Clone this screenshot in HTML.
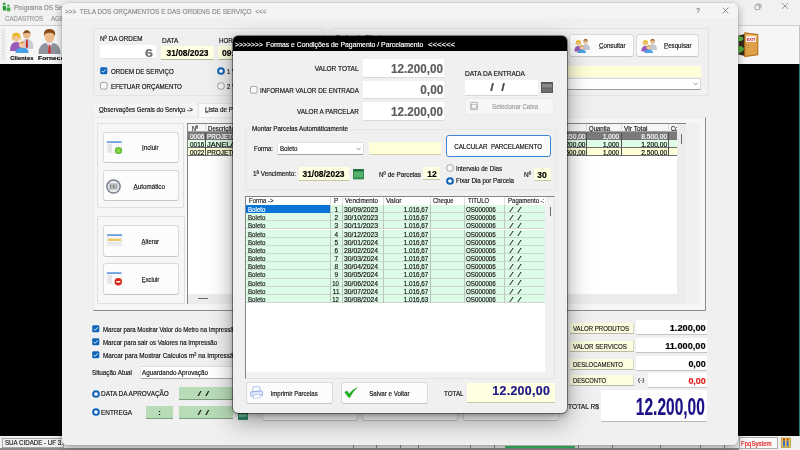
<!DOCTYPE html>
<html lang="pt-BR"><head><meta charset="utf-8"><title>Programa OS</title>
<style>
html,body{margin:0;padding:0}
body{width:800px;height:450px;overflow:hidden;background:#000;position:relative;font-family:"Liberation Sans",sans-serif}
#w{position:absolute;left:0;top:0;width:800px;height:450px;overflow:hidden;background:#000;will-change:transform}
.b{position:absolute;box-sizing:border-box}
.t{position:absolute;white-space:pre;font-family:"Liberation Sans",sans-serif;-webkit-text-stroke:0.18px currentColor}
svg{position:absolute;overflow:visible}
u{text-decoration:underline;text-decoration-thickness:0.4px;text-decoration-color:rgba(0,0,0,0.45);text-underline-offset:0.4px}
</style></head>
<body>
<div id="w">
<div class="b" style="left:0px;top:0px;width:800px;height:25px;background:#f1f1f1;"></div>
<div class="b" style="left:0px;top:25px;width:800px;height:38.8px;background:#f6f6f6;"></div>
<div class="b" style="left:0px;top:25px;width:800px;height:0.8px;background:#cfcfcf;"></div>
<div class="b" style="left:798.8px;top:25px;width:1.2px;height:38.8px;background:#c4c4c4;"></div>
<div class="b" style="left:0px;top:436px;width:800px;height:14px;background:#f0f0f0;"></div>
<svg style="left:2px;top:2px" width="9" height="10" viewBox="0 0 9 10"><circle cx="2.2" cy="2" r="1.4" fill="#3aa648"/><path d="M0.5 4 L4 4 L4.5 8.5 L1 8.5Z" fill="#2e9a3e"/><circle cx="6.3" cy="3.6" r="1.3" fill="#58b860"/><path d="M4.8 5.4 L8.3 5.4 L8.3 9.3 L5 9.3Z" fill="#3fa84c"/></svg>
<span class="t" style="top:3px;line-height:9px;height:9px;font-size:7.7px;color:#8c8c8c;left:14px;transform-origin:0 50%;transform:scaleX(0.827);">Programa OS Se</span>
<span class="t" style="top:14px;line-height:9px;height:9px;font-size:7.5px;color:#9a9a9a;left:5px;transform-origin:0 50%;transform:scaleX(0.814);">CADASTROS</span>
<span class="t" style="top:14px;line-height:9px;height:9px;font-size:7.5px;color:#9a9a9a;left:51px;transform-origin:0 50%;transform:scaleX(0.821);">AGE</span>
<svg style="left:1px;top:28px" width="5" height="33" viewBox="0 0 5 33"><rect x="0.3" y="0.50" width="0.9" height="0.9" fill="#bcbcbc"/><rect x="2.5" y="0.50" width="0.9" height="0.9" fill="#bcbcbc"/><rect x="1.4" y="2.10" width="0.9" height="0.9" fill="#bcbcbc"/><rect x="3.6" y="2.10" width="0.9" height="0.9" fill="#bcbcbc"/><rect x="0.3" y="3.70" width="0.9" height="0.9" fill="#bcbcbc"/><rect x="2.5" y="3.70" width="0.9" height="0.9" fill="#bcbcbc"/><rect x="1.4" y="5.30" width="0.9" height="0.9" fill="#bcbcbc"/><rect x="3.6" y="5.30" width="0.9" height="0.9" fill="#bcbcbc"/><rect x="0.3" y="6.90" width="0.9" height="0.9" fill="#bcbcbc"/><rect x="2.5" y="6.90" width="0.9" height="0.9" fill="#bcbcbc"/><rect x="1.4" y="8.50" width="0.9" height="0.9" fill="#bcbcbc"/><rect x="3.6" y="8.50" width="0.9" height="0.9" fill="#bcbcbc"/><rect x="0.3" y="10.10" width="0.9" height="0.9" fill="#bcbcbc"/><rect x="2.5" y="10.10" width="0.9" height="0.9" fill="#bcbcbc"/><rect x="1.4" y="11.70" width="0.9" height="0.9" fill="#bcbcbc"/><rect x="3.6" y="11.70" width="0.9" height="0.9" fill="#bcbcbc"/><rect x="0.3" y="13.30" width="0.9" height="0.9" fill="#bcbcbc"/><rect x="2.5" y="13.30" width="0.9" height="0.9" fill="#bcbcbc"/><rect x="1.4" y="14.90" width="0.9" height="0.9" fill="#bcbcbc"/><rect x="3.6" y="14.90" width="0.9" height="0.9" fill="#bcbcbc"/><rect x="0.3" y="16.50" width="0.9" height="0.9" fill="#bcbcbc"/><rect x="2.5" y="16.50" width="0.9" height="0.9" fill="#bcbcbc"/><rect x="1.4" y="18.10" width="0.9" height="0.9" fill="#bcbcbc"/><rect x="3.6" y="18.10" width="0.9" height="0.9" fill="#bcbcbc"/><rect x="0.3" y="19.70" width="0.9" height="0.9" fill="#bcbcbc"/><rect x="2.5" y="19.70" width="0.9" height="0.9" fill="#bcbcbc"/><rect x="1.4" y="21.30" width="0.9" height="0.9" fill="#bcbcbc"/><rect x="3.6" y="21.30" width="0.9" height="0.9" fill="#bcbcbc"/><rect x="0.3" y="22.90" width="0.9" height="0.9" fill="#bcbcbc"/><rect x="2.5" y="22.90" width="0.9" height="0.9" fill="#bcbcbc"/><rect x="1.4" y="24.50" width="0.9" height="0.9" fill="#bcbcbc"/><rect x="3.6" y="24.50" width="0.9" height="0.9" fill="#bcbcbc"/><rect x="0.3" y="26.10" width="0.9" height="0.9" fill="#bcbcbc"/><rect x="2.5" y="26.10" width="0.9" height="0.9" fill="#bcbcbc"/><rect x="1.4" y="27.70" width="0.9" height="0.9" fill="#bcbcbc"/><rect x="3.6" y="27.70" width="0.9" height="0.9" fill="#bcbcbc"/><rect x="0.3" y="29.30" width="0.9" height="0.9" fill="#bcbcbc"/><rect x="2.5" y="29.30" width="0.9" height="0.9" fill="#bcbcbc"/><rect x="1.4" y="30.90" width="0.9" height="0.9" fill="#bcbcbc"/><rect x="3.6" y="30.90" width="0.9" height="0.9" fill="#bcbcbc"/></svg>
<svg style="left:6.5px;top:29px" width="30" height="24" viewBox="0 0 28 23">
<ellipse cx="18.5" cy="5" rx="3.6" ry="4" fill="#e9b98a"/><path d="M14.6 4.5 Q18.5 -2 22.6 4.5 Q20 2.5 14.6 4.5Z" fill="#7a4a20"/>
<path d="M13 19 Q13 9.5 18.5 9.5 Q25 9.5 25 19Z" fill="#c9ccd6"/><path d="M18 10 L19.4 10 L19.8 17 L18.7 18.6 L17.6 17Z" fill="#c82828"/>
<ellipse cx="8.5" cy="8.5" rx="3.4" ry="3.7" fill="#f0c49a"/><path d="M4.4 12 Q3.6 3 8.5 3.6 Q13.6 3 12.6 12 Q12 6.5 8.5 6.5 Q5 6.5 4.4 12Z" fill="#e8b820"/>
<path d="M2.5 21 Q2.5 12.5 8.5 12.5 Q14.5 12.5 14.5 21Z" fill="#9a5ab8"/>
<path d="M7.6 23 Q7.6 18 14 18 Q20.4 18 20.4 23Z" fill="#4aa0e6"/><ellipse cx="14" cy="14.8" rx="3" ry="3.1" fill="#f2c9a2"/><path d="M10.8 14.6 Q14 9.6 17.2 14.6 Q14 12.4 10.8 14.6Z" fill="#c98a28"/></svg>
<span class="t" style="top:54px;line-height:7px;height:7px;font-size:6.2px;color:#000;font-weight:bold;left:8.94px;transform-origin:50% 50%;transform:scaleX(0.912);letter-spacing:0.2px;">Clientes</span>
<svg style="left:38px;top:28px" width="24" height="26" viewBox="0 0 24 26">
<path d="M0.5 26 Q0.5 14.5 11.5 14.5 Q22.5 14.5 22.5 26Z" fill="#8d929c"/><path d="M8.2 15 L11.5 19.5 L14.8 15Z" fill="#f4f4f4"/>
<path d="M10.8 16.5 L12.2 16.5 L12.8 24.5 L11.5 26 L10.2 24.5Z" fill="#d03030"/>
<ellipse cx="11.5" cy="8.6" rx="5" ry="5.8" fill="#ecbb8c"/><path d="M6 8.5 Q5 0.6 11.5 1 Q18.4 0.8 17 8.5 Q16 4.6 11.5 4.8 Q7 4.6 6 8.5Z" fill="#8a4a16"/></svg>
<span class="t" style="top:54px;line-height:7px;height:7px;font-size:6.2px;color:#000;font-weight:bold;left:38px;transform-origin:0 50%;transform:scaleX(1.037);letter-spacing:0.2px;">Fornece</span>
<svg style="left:754px;top:3px" width="8" height="8" viewBox="0 0 8 8"><rect x="1" y="2" width="4.6" height="4.6" rx="1" fill="none" stroke="#6a6a6a" stroke-width="0.6"/><path d="M2.6 1 L6 1 Q7 1 7 2 L7 5.4" fill="none" stroke="#6a6a6a" stroke-width="0.6"/></svg>
<svg style="left:781px;top:2px" width="8" height="8" viewBox="0 0 8 8"><path d="M1 1 L7 7 M7 1 L1 7" stroke="#6a6a6a" stroke-width="0.65" fill="none"/></svg>
<svg style="left:738px;top:31px" width="21" height="27" viewBox="0 0 21 27">
<path d="M0.5 4.5 L7 3 L7 25 L0.5 23.5Z" fill="#3a2c1c"/>
<path d="M0.5 5.5 Q4.5 4.5 5.5 8 Q3 10.8 0.5 10Z" fill="#5cc04a"/><path d="M0.5 15.5 Q5 14.5 6 18.5 Q3 22.5 0.5 21.5Z" fill="#52b440"/>
<path d="M6.2 1.2 L20.3 3 L20.3 24.2 L6.2 26.2Z" fill="#b8741e"/><path d="M7.4 2.8 L19.2 4.2 L19.2 23.2 L7.4 24.8Z" fill="#e0a048"/>
<path d="M7.4 2.8 L19.2 4.2 L19.2 7 L7.4 6Z" fill="#eab868"/>
<rect x="8" y="5.2" width="10" height="5.8" fill="#fbf4f0"/>
<text x="13" y="9.9" font-family="Liberation Sans, sans-serif" font-size="4.4" font-weight="bold" fill="#d81828" text-anchor="middle" textLength="8.6" lengthAdjust="spacingAndGlyphs">EXIT</text>
<circle cx="9.9" cy="15.4" r="1.1" fill="#f2cc80" stroke="#8a5410" stroke-width="0.4"/></svg>
<div class="b" style="left:798.6px;top:64px;width:1.4px;height:372px;background:#1f7f74;"></div>
<div class="b" style="left:1.5px;top:437.6px;width:62px;height:10px;background:#f2f2f2;border:0.6px solid #a8a8a8;"></div>
<span class="t" style="top:438px;line-height:9px;height:9px;font-size:7.2px;color:#222;left:4.5px;transform-origin:0 50%;transform:scaleX(0.858);">SUA CIDADE - UF 3.</span>
<div class="b" style="left:739.4px;top:437.4px;width:38.6px;height:11.6px;background:#fafafa;border:0.6px solid #b0b0b0;"></div>
<span class="t" style="top:439px;line-height:9px;height:9px;font-size:7.2px;color:#e01818;left:741.2px;transform-origin:0 50%;transform:scaleX(0.840);">FpqSystem</span>
<svg style="left:781px;top:437px" width="10" height="11" viewBox="0 0 10 11"><rect x="0.5" y="1" width="9" height="9.5" fill="#f0c840" stroke="#8a6a10" stroke-width="0.5"/><rect x="2" y="3.5" width="2" height="6" fill="#3a6ad0"/><rect x="5.6" y="3.5" width="2" height="6" fill="#3a6ad0"/><circle cx="3" cy="2.6" r="1" fill="#c03020"/><circle cx="6.6" cy="2.6" r="1" fill="#c03020"/></svg>
<div class="b" style="left:0px;top:447.6px;width:738.5px;height:2.4px;background:#8c8c8c;"></div>
<div class="b" style="left:505px;top:446.4px;width:70px;height:1.4px;background:#38c060;"></div>
<div class="b" style="left:353px;top:445px;width:0.7px;height:3px;background:#8a8a8a;"></div>
<div class="b" style="left:376px;top:445px;width:0.7px;height:3px;background:#8a8a8a;"></div>
<div class="b" style="left:400px;top:445px;width:0.7px;height:3px;background:#8a8a8a;"></div>
<div class="b" style="left:418px;top:445px;width:0.7px;height:3px;background:#8a8a8a;"></div>
<div class="b" style="left:470px;top:445px;width:0.7px;height:3px;background:#8a8a8a;"></div>
<div class="b" style="left:494px;top:445px;width:0.7px;height:3px;background:#8a8a8a;"></div>
<div class="b" style="left:578px;top:445px;width:0.7px;height:3px;background:#8a8a8a;"></div>
<div class="b" style="left:612px;top:445px;width:0.7px;height:3px;background:#8a8a8a;"></div>
<div class="b" style="left:660px;top:445px;width:0.7px;height:3px;background:#8a8a8a;"></div>
<div class="b" style="left:700px;top:445px;width:0.7px;height:3px;background:#8a8a8a;"></div>
<div class="b" style="left:724px;top:445px;width:0.7px;height:3px;background:#8a8a8a;"></div>
<div class="b" style="left:62px;top:2.6px;width:676.4px;height:442px;background:#f0f0f0;border-radius:5.5px;box-shadow:0 3px 10px rgba(0,0,0,0.35),0 0 0 0.5px rgba(0,0,0,0.10);"></div>
<div class="b" style="left:62px;top:2.6px;width:676.4px;height:15px;background:#f4f4f4;border-radius:5.5px 5.5px 0 0;"></div>
<span class="t" style="top:7px;line-height:9px;height:9px;font-size:7.7px;color:#8a8a8a;left:65px;transform-origin:0 50%;transform:scaleX(0.841);">&gt;&gt;&gt;  TELA DOS ORÇAMENTOS E DAS ORDENS DE SERVIÇO  &lt;&lt;&lt;</span>
<span class="t" style="top:6px;line-height:9px;height:9px;font-size:7.8px;color:#6a6a6a;left:696.33px;transform-origin:50% 50%;transform:scaleX(0.830);">?</span>
<svg style="left:721.6px;top:6.8px" width="7" height="7" viewBox="0 0 7 7"><path d="M0.6 0.6 L6.4 6.4 M6.4 0.6 L0.6 6.4" stroke="#686868" stroke-width="0.75" fill="none"/></svg>
<div class="b" style="left:92.5px;top:27.5px;width:231px;height:68.5px;border:0.6px solid #e4e4e4;border-radius:1px;"></div>
<span class="t" style="top:34px;line-height:9px;height:9px;font-size:7.7px;color:#111;left:100px;transform-origin:0 50%;transform:scaleX(0.824);">Nº DA ORDEM</span>
<div class="b" style="left:99.6px;top:45.2px;width:56.6px;height:13.8px;background:#fff;border-bottom:0.6px solid #e2e2e2;"></div>
<span class="t" style="top:47px;line-height:12px;height:12px;font-size:11px;color:#707070;font-weight:bold;right:646.5px;transform-origin:100% 50%;transform:scaleX(1.308);">6</span>
<span class="t" style="top:36px;line-height:9px;height:9px;font-size:7.7px;color:#111;left:162px;transform-origin:0 50%;transform:scaleX(0.851);">DATA</span>
<div class="b" style="left:161px;top:46px;width:52.5px;height:13.5px;background:#ffffe1;border-bottom:0.6px solid #b8b8a0;"></div>
<span class="t" style="top:48px;line-height:10px;height:10px;font-size:9px;color:#000;font-weight:bold;left:164.78px;transform-origin:50% 50%;transform:scaleX(0.933);">31/08/2023</span>
<span class="t" style="top:36px;line-height:9px;height:9px;font-size:7.7px;color:#111;left:218.5px;transform-origin:0 50%;transform:scaleX(0.809);">HORA</span>
<div class="b" style="left:218px;top:46px;width:40px;height:13.5px;background:#ffffe1;border-bottom:0.6px solid #b8b8a0;"></div>
<span class="t" style="top:48px;line-height:10px;height:10px;font-size:9px;color:#000;font-weight:bold;left:222px;transform-origin:0 50%;transform:scaleX(0.956);">09:15</span>
<svg style="left:99.5px;top:67.2px" width="7.5" height="7.5" viewBox="0 0 8 8"><rect x="0.2" y="0.2" width="7.6" height="7.6" rx="1.5" fill="#0f64b8"/><path d="M1.9 4.1 L3.4 5.6 L6.2 2.5" stroke="#fff" stroke-width="0.9" fill="none"/></svg>
<span class="t" style="top:67px;line-height:9px;height:9px;font-size:7.7px;color:#111;left:110.5px;transform-origin:0 50%;transform:scaleX(0.806);">ORDEM DE SERVIÇO</span>
<svg style="left:99.5px;top:82px" width="7.5" height="7.5" viewBox="0 0 8 8"><rect x="0.5" y="0.5" width="7" height="7" rx="1.4" fill="#fafafa" stroke="#6a6a6a" stroke-width="0.6"/></svg>
<span class="t" style="top:82px;line-height:9px;height:9px;font-size:7.7px;color:#111;left:110.5px;transform-origin:0 50%;transform:scaleX(0.807);">EFETUAR ORÇAMENTO</span>
<svg style="left:217px;top:67.2px" width="8" height="8" viewBox="0 0 8 8"><circle cx="4" cy="4" r="3.85" fill="#0f62b6"/><circle cx="4" cy="4" r="1.85" fill="#fff"/></svg>
<span class="t" style="top:67px;line-height:9px;height:9px;font-size:7.7px;color:#111;left:227px;transform-origin:0 50%;transform:scaleX(0.779);">1 V</span>
<svg style="left:217px;top:82px" width="8" height="8" viewBox="0 0 8 8"><circle cx="4" cy="4" r="3.4" fill="#fafafa" stroke="#6a6a6a" stroke-width="0.6"/></svg>
<span class="t" style="top:82px;line-height:9px;height:9px;font-size:7.7px;color:#111;left:227px;transform-origin:0 50%;transform:scaleX(0.779);">2 V</span>
<div class="b" style="left:330px;top:27.5px;width:378.5px;height:68.5px;border:0.6px solid #e4e4e4;border-radius:1px;"></div>
<span class="t" style="top:33px;line-height:9px;height:9px;font-size:7.5px;color:#222;left:336px;transform-origin:0 50%;transform:scaleX(0.834);">Dados do Cliente</span>
<div class="b" style="left:569px;top:33.5px;width:64.5px;height:23.5px;background:#fcfcfc;border:0.6px solid #dadada;border-radius:3px;border-bottom-color:#c6c6c6;"></div>
<svg style="left:573px;top:37.5px" width="19" height="15" viewBox="0 0 19 15">
<ellipse cx="12.6" cy="3.2" rx="2.3" ry="2.5" fill="#e9b98a"/><path d="M10.2 3 Q12.6 -1.2 15.2 3 Q13 1.6 10.2 3Z" fill="#7a4a20"/>
<path d="M9 12 Q9 6 12.6 6 Q17 6 17 12Z" fill="#c4c7d2"/>
<ellipse cx="5.4" cy="5.4" rx="2.2" ry="2.4" fill="#f0c49a"/><path d="M2.8 7.6 Q2.2 1.8 5.4 2.2 Q8.8 1.8 8 7.6 Q7.6 4.2 5.4 4.2 Q3.2 4.2 2.8 7.6Z" fill="#e8b820"/>
<path d="M1.4 13.4 Q1.4 8 5.4 8 Q9.4 8 9.4 13.4Z" fill="#9a5ab8"/>
<path d="M4.4 15 Q4.4 11.4 8.7 11.4 Q13 11.4 13 15Z" fill="#4aa0e6"/><ellipse cx="8.7" cy="9.3" rx="2.1" ry="2.2" fill="#f2c9a2"/><path d="M6.5 9 Q8.7 5.6 11 9 Q8.7 7.6 6.5 9Z" fill="#c08a30"/></svg>
<span class="t" style="top:41px;line-height:9px;height:9px;font-size:7.7px;color:#111;left:598.5px;transform-origin:0 50%;transform:scaleX(0.804);"><u>C</u>onsultar</span>
<div class="b" style="left:636px;top:33.5px;width:62.5px;height:23.5px;background:#fcfcfc;border:0.6px solid #dadada;border-radius:3px;border-bottom-color:#c6c6c6;"></div>
<svg style="left:639.5px;top:37.5px" width="19" height="15" viewBox="0 0 19 15">
<ellipse cx="12.6" cy="3.2" rx="2.3" ry="2.5" fill="#e9b98a"/><path d="M10.2 3 Q12.6 -1.2 15.2 3 Q13 1.6 10.2 3Z" fill="#7a4a20"/>
<path d="M9 12 Q9 6 12.6 6 Q17 6 17 12Z" fill="#c4c7d2"/>
<ellipse cx="5.4" cy="5.4" rx="2.2" ry="2.4" fill="#f0c49a"/><path d="M2.8 7.6 Q2.2 1.8 5.4 2.2 Q8.8 1.8 8 7.6 Q7.6 4.2 5.4 4.2 Q3.2 4.2 2.8 7.6Z" fill="#e8b820"/>
<path d="M1.4 13.4 Q1.4 8 5.4 8 Q9.4 8 9.4 13.4Z" fill="#9a5ab8"/>
<path d="M4.4 15 Q4.4 11.4 8.7 11.4 Q13 11.4 13 15Z" fill="#4aa0e6"/><ellipse cx="8.7" cy="9.3" rx="2.1" ry="2.2" fill="#f2c9a2"/><path d="M6.5 9 Q8.7 5.6 11 9 Q8.7 7.6 6.5 9Z" fill="#c08a30"/></svg>
<span class="t" style="top:41px;line-height:9px;height:9px;font-size:7.7px;color:#111;left:663.5px;transform-origin:0 50%;transform:scaleX(0.803);"><u>P</u>esquisar</span>
<div class="b" style="left:334px;top:66px;width:367px;height:10.5px;background:#ffffd8;"></div>
<div class="b" style="left:334px;top:78px;width:367px;height:11.5px;background:#fff;border:0.6px solid #dcdcdc;border-radius:1px;border-bottom-color:#9a9a9a;"></div>
<svg style="left:693px;top:82px" width="5" height="4" viewBox="0 0 5 4"><path d="M0.5 0.8 L2.5 2.9 L4.5 0.8" stroke="#555" stroke-width="0.6" fill="none"/></svg>
<div class="b" style="left:94px;top:103px;width:103px;height:12.5px;background:#f4f4f4;"></div>
<span class="t" style="top:105px;line-height:9px;height:9px;font-size:7.7px;color:#111;left:99px;transform-origin:0 50%;transform:scaleX(0.797);"><u>O</u>bservações Gerais do Serviço -&gt;</span>
<div class="b" style="left:197.5px;top:102.5px;width:60px;height:14.5px;background:#fafafa;border:0.6px solid #e4e4e4;border-bottom:none;"></div>
<span class="t" style="top:105px;line-height:9px;height:9px;font-size:7.7px;color:#111;left:205px;transform-origin:0 50%;transform:scaleX(0.818);"><u>L</u>ista de P</span>
<div class="b" style="left:92.5px;top:116.5px;width:613px;height:194px;background:#f6f6f6;border:0.6px solid #e9e9e9;border-right:1.2px solid #8c8c8c;border-bottom:1.2px solid #8c8c8c;"></div>
<div class="b" style="left:96.6px;top:123.2px;width:87.4px;height:85px;border:0.6px solid #e0e0e0;border-radius:1px;"></div>
<div class="b" style="left:96.6px;top:216.4px;width:88.4px;height:87.6px;border:0.6px solid #e0e0e0;border-radius:1px;"></div>
<div class="b" style="left:102.6px;top:131.5px;width:76.6px;height:31.6px;background:#fcfcfc;border:0.6px solid #dadada;border-radius:3px;border-bottom-color:#c6c6c6;"></div>
<svg style="left:107px;top:140.5px" width="16" height="14" viewBox="0 0 16 14"><rect x="0" y="0.3" width="14.5" height="11.5" fill="#fbfbfb" stroke="#d8d8d8" stroke-width="0.4"/><rect x="0" y="0.3" width="14.5" height="1.6" fill="#5a96e0"/><rect x="1" y="3" width="4" height="8" fill="#e4e4e4"/><circle cx="11.5" cy="9.5" r="3.6" fill="#58b82e"/><circle cx="11.5" cy="9.5" r="2.2" fill="#8ad84a"/></svg>
<span class="t" style="top:143px;line-height:9px;height:9px;font-size:7.7px;color:#111;left:139.73px;transform-origin:50% 50%;transform:scaleX(0.803);"><u>I</u>ncluir</span>
<div class="b" style="left:102.6px;top:169.6px;width:76.6px;height:31.6px;background:#fcfcfc;border:0.6px solid #dadada;border-radius:3px;border-bottom-color:#c6c6c6;"></div>
<svg style="left:106px;top:178.5px" width="15" height="15" viewBox="0 0 15 15"><circle cx="7.5" cy="7.5" r="6.6" fill="#eceef2" stroke="#7a8290" stroke-width="1.5"/><rect x="3.6" y="4.6" width="7.8" height="5.8" fill="#fff" stroke="#666" stroke-width="0.3"/><path d="M4.6 5.2V9.8M6 5.2V9.8M7.4 5.2V9.8M8.8 5.2V9.8M10.2 5.2V9.8" stroke="#444" stroke-width="0.7"/></svg>
<span class="t" style="top:182px;line-height:9px;height:9px;font-size:7.7px;color:#111;left:129.74px;transform-origin:50% 50%;transform:scaleX(0.818);"><u>A</u>utomático</span>
<div class="b" style="left:102.6px;top:225px;width:76.6px;height:31.6px;background:#fcfcfc;border:0.6px solid #dadada;border-radius:3px;border-bottom-color:#c6c6c6;"></div>
<svg style="left:107px;top:234px" width="16" height="13" viewBox="0 0 16 13"><rect x="0" y="0.3" width="15" height="11.5" fill="#f6f6f6" stroke="#d8d8d8" stroke-width="0.4"/><rect x="0" y="0.3" width="15" height="1.6" fill="#5a96e0"/><rect x="1" y="4.6" width="13" height="2.4" fill="#e8c860"/><rect x="1" y="8" width="13" height="2.4" fill="#e6e6e6"/></svg>
<span class="t" style="top:237px;line-height:9px;height:9px;font-size:7.7px;color:#111;left:139.16px;transform-origin:50% 50%;transform:scaleX(0.772);"><u>A</u>lterar</span>
<div class="b" style="left:102.6px;top:263px;width:76.6px;height:31.6px;background:#fcfcfc;border:0.6px solid #dadada;border-radius:3px;border-bottom-color:#c6c6c6;"></div>
<svg style="left:107px;top:272px" width="16" height="14" viewBox="0 0 16 14"><rect x="0" y="0.3" width="14.5" height="11.5" fill="#fbfbfb" stroke="#d8d8d8" stroke-width="0.4"/><rect x="0" y="0.3" width="14.5" height="1.6" fill="#5a96e0"/><rect x="1" y="3" width="4" height="8" fill="#e4e4e4"/><circle cx="11.3" cy="9.7" r="3.7" fill="#d82818"/><rect x="9.3" y="9" width="4" height="1.5" fill="#fff"/></svg>
<span class="t" style="top:275px;line-height:9px;height:9px;font-size:7.7px;color:#111;left:138.95px;transform-origin:50% 50%;transform:scaleX(0.757);"><u>E</u>xcluir</span>
<div class="b" style="left:187px;top:123.2px;width:499px;height:180.4px;background:#fff;border-top:0.8px solid #858585;border-left:0.8px solid #858585;"></div>
<div class="b" style="left:187.8px;top:124px;width:489.2px;height:8.2px;background:#f6f6f6;border-bottom:0.6px solid #a0a0a0;"></div>
<span class="t" style="top:124px;line-height:9px;height:9px;font-size:7.5px;color:#111;left:191.5px;transform-origin:0 50%;transform:scaleX(0.736);">Nº</span>
<span class="t" style="top:124px;line-height:9px;height:9px;font-size:7.5px;color:#111;left:208px;transform-origin:0 50%;transform:scaleX(0.810);">Descrição</span>
<span class="t" style="top:124px;line-height:9px;height:9px;font-size:7.5px;color:#111;left:589px;transform-origin:0 50%;transform:scaleX(0.800);">Quantia</span>
<span class="t" style="top:124px;line-height:9px;height:9px;font-size:7.5px;color:#111;left:623.5px;transform-origin:0 50%;transform:scaleX(0.872);">Vlr Total</span>
<span class="t" style="top:124px;line-height:9px;height:9px;font-size:7.5px;color:#111;left:670.5px;transform-origin:0 50%;transform:scaleX(0.730);">Co</span>
<div class="b" style="left:205.2px;top:124px;width:0.6px;height:8.2px;background:#dadada;"></div>
<div class="b" style="left:586px;top:124px;width:0.6px;height:8.2px;background:#dadada;"></div>
<div class="b" style="left:620.6px;top:124px;width:0.6px;height:8.2px;background:#dadada;"></div>
<div class="b" style="left:667.6px;top:124px;width:0.6px;height:8.2px;background:#dadada;"></div>
<div class="b" style="left:187.8px;top:132.2px;width:488.8px;height:8.1px;background:#7a7a7a;border-bottom:0.6px solid #707070;"></div>
<div class="b" style="left:205.2px;top:132.2px;width:0.7px;height:8.1px;background:#505050;"></div>
<div class="b" style="left:586px;top:132.2px;width:0.7px;height:8.1px;background:#505050;"></div>
<div class="b" style="left:620.6px;top:132.2px;width:0.7px;height:8.1px;background:#505050;"></div>
<div class="b" style="left:667.6px;top:132.2px;width:0.7px;height:8.1px;background:#505050;"></div>
<span class="t" style="top:132px;line-height:9px;height:9px;font-size:8px;color:#fff;left:189.6px;transform-origin:0 50%;transform:scaleX(0.809);">0006</span>
<span class="t" style="top:132px;line-height:9px;height:9px;font-size:8px;color:#fff;left:207px;transform-origin:0 50%;transform:scaleX(0.797);">PROJETO</span>
<span class="t" style="top:132px;line-height:9px;height:9px;font-size:8px;color:#fff;right:215px;transform-origin:100% 50%;transform:scaleX(0.817);">450,00</span>
<span class="t" style="top:132px;line-height:9px;height:9px;font-size:8px;color:#fff;right:181px;transform-origin:100% 50%;transform:scaleX(0.799);">1,000</span>
<span class="t" style="top:132px;line-height:9px;height:9px;font-size:8px;color:#fff;right:133px;transform-origin:100% 50%;transform:scaleX(0.835);">8.500,00</span>
<div class="b" style="left:187.8px;top:140.3px;width:488.8px;height:8.1px;background:#defce6;border-bottom:0.6px solid #707070;"></div>
<div class="b" style="left:205.2px;top:140.3px;width:0.7px;height:8.1px;background:#505050;"></div>
<div class="b" style="left:586px;top:140.3px;width:0.7px;height:8.1px;background:#505050;"></div>
<div class="b" style="left:620.6px;top:140.3px;width:0.7px;height:8.1px;background:#505050;"></div>
<div class="b" style="left:667.6px;top:140.3px;width:0.7px;height:8.1px;background:#505050;"></div>
<span class="t" style="top:140px;line-height:9px;height:9px;font-size:8px;color:#000;left:189.6px;transform-origin:0 50%;transform:scaleX(0.809);">0016</span>
<span class="t" style="top:140px;line-height:9px;height:9px;font-size:8px;color:#000;left:207px;transform-origin:0 50%;transform:scaleX(0.937);">JANELA </span>
<span class="t" style="top:140px;line-height:9px;height:9px;font-size:8px;color:#000;right:215px;transform-origin:100% 50%;transform:scaleX(0.817);">200,00</span>
<span class="t" style="top:140px;line-height:9px;height:9px;font-size:8px;color:#000;right:181px;transform-origin:100% 50%;transform:scaleX(0.799);">1,000</span>
<span class="t" style="top:140px;line-height:9px;height:9px;font-size:8px;color:#000;right:133px;transform-origin:100% 50%;transform:scaleX(0.835);">1.200,00</span>
<div class="b" style="left:187.8px;top:148.4px;width:488.8px;height:8.1px;background:#ffffd8;border-bottom:0.6px solid #707070;"></div>
<div class="b" style="left:205.2px;top:148.4px;width:0.7px;height:8.1px;background:#505050;"></div>
<div class="b" style="left:586px;top:148.4px;width:0.7px;height:8.1px;background:#505050;"></div>
<div class="b" style="left:620.6px;top:148.4px;width:0.7px;height:8.1px;background:#505050;"></div>
<div class="b" style="left:667.6px;top:148.4px;width:0.7px;height:8.1px;background:#505050;"></div>
<span class="t" style="top:148px;line-height:9px;height:9px;font-size:8px;color:#000;left:189.6px;transform-origin:0 50%;transform:scaleX(0.809);">0022</span>
<span class="t" style="top:148px;line-height:9px;height:9px;font-size:8px;color:#000;left:207px;transform-origin:0 50%;transform:scaleX(0.797);">PROJETO</span>
<span class="t" style="top:148px;line-height:9px;height:9px;font-size:8px;color:#000;right:215px;transform-origin:100% 50%;transform:scaleX(0.817);">500,00</span>
<span class="t" style="top:148px;line-height:9px;height:9px;font-size:8px;color:#000;right:181px;transform-origin:100% 50%;transform:scaleX(0.799);">1,000</span>
<span class="t" style="top:148px;line-height:9px;height:9px;font-size:8px;color:#000;right:133px;transform-origin:100% 50%;transform:scaleX(0.835);">2.500,00</span>
<div class="b" style="left:676.6px;top:124px;width:9.6px;height:179.6px;background:#ececec;"></div>
<div class="b" style="left:681px;top:134px;width:0.9px;height:9.6px;background:#6a6a6a;"></div>
<div class="b" style="left:187.8px;top:294.2px;width:498.2px;height:9.4px;background:#ececec;"></div>
<div class="b" style="left:198px;top:298.2px;width:10px;height:0.8px;background:#6a6a6a;"></div>
<div class="b" style="left:686px;top:123.2px;width:14px;height:181px;background:#f0f0f0;"></div>
<svg style="left:92px;top:325.2px" width="7.5" height="7.5" viewBox="0 0 8 8"><rect x="0.2" y="0.2" width="7.6" height="7.6" rx="1.5" fill="#0f64b8"/><path d="M1.9 4.1 L3.4 5.6 L6.2 2.5" stroke="#fff" stroke-width="0.9" fill="none"/></svg>
<span class="t" style="top:325px;line-height:9px;height:9px;font-size:7.5px;color:#111;left:102.5px;transform-origin:0 50%;transform:scaleX(0.806);">Marcar para Mostrar Valor do Metro na Impressão</span>
<svg style="left:92px;top:338.2px" width="7.5" height="7.5" viewBox="0 0 8 8"><rect x="0.2" y="0.2" width="7.6" height="7.6" rx="1.5" fill="#0f64b8"/><path d="M1.9 4.1 L3.4 5.6 L6.2 2.5" stroke="#fff" stroke-width="0.9" fill="none"/></svg>
<span class="t" style="top:338px;line-height:9px;height:9px;font-size:7.5px;color:#111;left:102.5px;transform-origin:0 50%;transform:scaleX(0.820);">Marcar para sair os Valores na Impressão</span>
<svg style="left:92px;top:351.2px" width="7.5" height="7.5" viewBox="0 0 8 8"><rect x="0.2" y="0.2" width="7.6" height="7.6" rx="1.5" fill="#0f64b8"/><path d="M1.9 4.1 L3.4 5.6 L6.2 2.5" stroke="#fff" stroke-width="0.9" fill="none"/></svg>
<span class="t" style="top:351px;line-height:9px;height:9px;font-size:7.5px;color:#111;left:102.5px;transform-origin:0 50%;transform:scaleX(0.853);">Marcar para Mostrar Calculos m² na Impressão</span>
<span class="t" style="top:368px;line-height:9px;height:9px;font-size:7.5px;color:#111;left:92px;transform-origin:0 50%;transform:scaleX(0.834);">Situação Atual</span>
<div class="b" style="left:139.5px;top:366.2px;width:150px;height:12.8px;background:#fff;border:0.6px solid #e0e0e0;border-radius:1.5px;border-bottom-color:#a8a8a8;"></div>
<span class="t" style="top:368px;line-height:9px;height:9px;font-size:7.5px;color:#111;left:141.5px;transform-origin:0 50%;transform:scaleX(0.842);">Aguardando Aprovação</span>
<svg style="left:91.5px;top:389.5px" width="8" height="8" viewBox="0 0 8 8"><circle cx="4" cy="4" r="3.85" fill="#0f62b6"/><circle cx="4" cy="4" r="1.85" fill="#fff"/></svg>
<span class="t" style="top:389px;line-height:9px;height:9px;font-size:7.7px;color:#111;left:101px;transform-origin:0 50%;transform:scaleX(0.836);">DATA DA APROVAÇÃO</span>
<div class="b" style="left:178.5px;top:386.5px;width:54px;height:13.5px;background:#b9dcb8;border-bottom:0.8px solid #7f9e7f;"></div>
<span class="t" style="top:389px;line-height:9px;height:9px;font-size:7.5px;color:#111;font-weight:bold;left:199.03px;transform-origin:50% 50%;transform:scaleX(1.248);font-style:italic;">/  /</span>
<svg style="left:91.5px;top:408.2px" width="8" height="8" viewBox="0 0 8 8"><circle cx="4" cy="4" r="3.85" fill="#0f62b6"/><circle cx="4" cy="4" r="1.85" fill="#fff"/></svg>
<span class="t" style="top:408px;line-height:9px;height:9px;font-size:7.7px;color:#111;left:101px;transform-origin:0 50%;transform:scaleX(0.833);">ENTREGA</span>
<div class="b" style="left:146px;top:405.5px;width:27px;height:13.5px;background:#b9dcb8;border-bottom:0.8px solid #7f9e7f;"></div>
<span class="t" style="top:408px;line-height:9px;height:9px;font-size:7.5px;color:#111;font-weight:bold;left:158.25px;transform-origin:50% 50%;">:</span>
<div class="b" style="left:178.5px;top:405.5px;width:54px;height:13.5px;background:#b9dcb8;border-bottom:0.8px solid #7f9e7f;"></div>
<span class="t" style="top:408px;line-height:9px;height:9px;font-size:7.5px;color:#111;font-weight:bold;left:199.03px;transform-origin:50% 50%;transform:scaleX(1.248);font-style:italic;">/  /</span>
<svg style="left:237.5px;top:412.5px" width="10" height="7" viewBox="0 0 10 7"><rect x="0" y="0" width="10" height="7" fill="#2f8a6a"/><rect x="1" y="1.2" width="8" height="2.6" fill="#7ac8a0"/></svg>
<div class="b" style="left:261.5px;top:400px;width:96px;height:21.3px;background:#fcfcfc;border:0.6px solid #dadada;border-radius:3px;border-bottom-color:#c6c6c6;"></div>
<div class="b" style="left:362px;top:400px;width:96px;height:21.3px;background:#fcfcfc;border:0.6px solid #dadada;border-radius:3px;border-bottom-color:#c6c6c6;"></div>
<div class="b" style="left:462.5px;top:400px;width:96.3px;height:21.3px;background:#fcfcfc;border:0.6px solid #dadada;border-radius:3px;border-bottom-color:#c6c6c6;"></div>
<div class="b" style="left:570px;top:323px;width:64px;height:10.6px;background:#fcfcde;border-bottom:0.8px solid #b8b8a4;border-right:0.5px solid #d8d8c8;"></div>
<span class="t" style="top:324px;line-height:9px;height:9px;font-size:7.5px;color:#222;left:572.5px;transform-origin:0 50%;transform:scaleX(0.808);">VALOR PRODUTOS</span>
<div class="b" style="left:635.6px;top:320.2px;width:71.4px;height:14.5px;background:#fff;border-bottom:0.7px solid #c4c4c4;"></div>
<span class="t" style="top:322px;line-height:11px;height:11px;font-size:9.7px;color:#000;font-weight:bold;right:94.5px;transform-origin:100% 50%;transform:scaleX(0.954);">1.200,00</span>
<div class="b" style="left:570px;top:341px;width:64px;height:10.6px;background:#fcfcde;border-bottom:0.8px solid #b8b8a4;border-right:0.5px solid #d8d8c8;"></div>
<span class="t" style="top:342px;line-height:9px;height:9px;font-size:7.5px;color:#222;left:572.5px;transform-origin:0 50%;transform:scaleX(0.823);">VALOR SERVICOS</span>
<div class="b" style="left:635.6px;top:338.2px;width:71.4px;height:14.5px;background:#fff;border-bottom:0.7px solid #c4c4c4;"></div>
<span class="t" style="top:340px;line-height:11px;height:11px;font-size:9.7px;color:#000;font-weight:bold;right:94.5px;transform-origin:100% 50%;transform:scaleX(0.950);">11.000,00</span>
<div class="b" style="left:570px;top:359.2px;width:64px;height:10.6px;background:#fcfcde;border-bottom:0.8px solid #b8b8a4;border-right:0.5px solid #d8d8c8;"></div>
<span class="t" style="top:360px;line-height:9px;height:9px;font-size:7.5px;color:#222;left:572.5px;transform-origin:0 50%;transform:scaleX(0.796);">DESLOCAMENTO</span>
<div class="b" style="left:635.6px;top:356px;width:71.4px;height:14.5px;background:#fff;border-bottom:0.7px solid #c4c4c4;"></div>
<span class="t" style="top:358px;line-height:11px;height:11px;font-size:9.7px;color:#000;font-weight:bold;right:94.5px;transform-origin:100% 50%;transform:scaleX(0.927);">0,00</span>
<div class="b" style="left:570px;top:375.4px;width:64px;height:10.6px;background:#fcfcde;border-bottom:0.8px solid #b8b8a4;border-right:0.5px solid #d8d8c8;"></div>
<span class="t" style="top:376px;line-height:9px;height:9px;font-size:7.5px;color:#222;left:572.5px;transform-origin:0 50%;transform:scaleX(0.779);">DESCONTO</span>
<span class="t" style="top:377px;line-height:6px;height:6px;font-size:6px;color:#333;left:638px;transform-origin:0 50%;transform:scaleX(1.085);">(-)</span>
<div class="b" style="left:648px;top:373.2px;width:59px;height:14.5px;background:#fff;border-bottom:0.7px solid #c4c4c4;"></div>
<span class="t" style="top:375px;line-height:11px;height:11px;font-size:9.7px;color:#e21c1c;font-weight:bold;right:94.5px;transform-origin:100% 50%;transform:scaleX(0.927);">0,00</span>
<span class="t" style="top:402px;line-height:9px;height:9px;font-size:7.5px;color:#111;left:567.5px;transform-origin:0 50%;transform:scaleX(0.889);">TOTAL R$</span>
<div class="b" style="left:601.2px;top:390.3px;width:105.8px;height:31.6px;background:#fff;border-bottom:0.9px solid #b8b8b8;"></div>
<span class="t" style="top:393px;line-height:27px;height:27px;font-size:24.7px;color:#1a1086;font-weight:bold;right:95.4px;transform-origin:100% 50%;transform:scaleX(0.628);">12.200,00</span>
<div class="b" style="left:232.5px;top:36px;width:334.5px;height:376.5px;background:#f0f0f0;border-radius:5px;box-shadow:0 8px 24px rgba(0,0,0,0.38),0 2px 5px rgba(0,0,0,0.30),0 0 0 0.8px rgba(0,0,0,0.5);overflow:hidden;"><div class="b" style="left:0;top:0;width:100%;height:14.8px;background:#000"></div></div>
<span class="t" style="top:40px;line-height:9px;height:9px;font-size:7.2px;color:#fff;left:234.8px;transform-origin:0 50%;transform:scaleX(0.951);">&gt;&gt;&gt;&gt;&gt;&gt;&gt;</span>
<span class="t" style="top:40px;line-height:9px;height:9px;font-size:7.2px;color:#fff;left:265.5px;transform-origin:0 50%;transform:scaleX(0.951);">Formas e Condições de Pagamento / Parcelamento</span>
<span class="t" style="top:40px;line-height:9px;height:9px;font-size:7.2px;color:#fff;left:428px;transform-origin:0 50%;transform:scaleX(1.070);">&lt;&lt;&lt;&lt;&lt;&lt;</span>
<span class="t" style="top:64px;line-height:9px;height:9px;font-size:7.7px;color:#111;right:441.5px;transform-origin:100% 50%;transform:scaleX(0.852);">VALOR TOTAL</span>
<div class="b" style="left:363px;top:59px;width:81px;height:18.8px;background:#fff;border-bottom:0.7px solid #dadada;"></div>
<span class="t" style="top:61px;line-height:15px;height:15px;font-size:13.5px;color:#5c5c5c;font-weight:bold;right:356.8px;transform-origin:100% 50%;transform:scaleX(0.866);">12.200,00</span>
<svg style="left:250px;top:86px" width="7.6" height="7.6" viewBox="0 0 8 8"><rect x="0.5" y="0.5" width="7" height="7" rx="1.4" fill="#fafafa" stroke="#6a6a6a" stroke-width="0.6"/></svg>
<span class="t" style="top:86px;line-height:9px;height:9px;font-size:7.7px;color:#111;left:259.5px;transform-origin:0 50%;transform:scaleX(0.822);">INFORMAR VALOR DE ENTRADA</span>
<div class="b" style="left:363px;top:80.5px;width:81px;height:18.8px;background:#fff;border-bottom:0.7px solid #dadada;"></div>
<span class="t" style="top:82px;line-height:15px;height:15px;font-size:13.5px;color:#5c5c5c;font-weight:bold;right:356.8px;transform-origin:100% 50%;transform:scaleX(0.875);">0,00</span>
<span class="t" style="top:107px;line-height:9px;height:9px;font-size:7.7px;color:#111;right:441.5px;transform-origin:100% 50%;transform:scaleX(0.826);">VALOR A PARCELAR</span>
<div class="b" style="left:363px;top:102px;width:81px;height:18.8px;background:#fff;border-bottom:0.7px solid #dadada;"></div>
<span class="t" style="top:104px;line-height:15px;height:15px;font-size:13.5px;color:#5c5c5c;font-weight:bold;right:356.8px;transform-origin:100% 50%;transform:scaleX(0.866);">12.200,00</span>
<span class="t" style="top:69px;line-height:9px;height:9px;font-size:7.7px;color:#111;left:464.5px;transform-origin:0 50%;transform:scaleX(0.853);">DATA DA ENTRADA</span>
<div class="b" style="left:465px;top:79.6px;width:72.5px;height:16.2px;background:#fff;border-bottom:0.7px solid #d6d6d6;"></div>
<span class="t" style="top:82px;line-height:11px;height:11px;font-size:10px;color:#444;font-weight:bold;left:492.44px;transform-origin:50% 50%;transform:scaleX(1.305);">/  /</span>
<svg style="left:541px;top:82px" width="12" height="11" viewBox="0 0 12 11"><rect x="0" y="0" width="12" height="11" fill="#5a5a5a"/><rect x="1" y="2" width="10" height="3.5" fill="#8a8a8a"/><rect x="1" y="6.5" width="10" height="3.5" fill="#6e6e6e"/></svg>
<div class="b" style="left:465.4px;top:98.2px;width:88.4px;height:16.6px;background:#f6f6f6;border:0.6px solid #ebebeb;border-radius:2px;"></div>
<svg style="left:470px;top:102px" width="8" height="8" viewBox="0 0 8 8"><rect x="0.4" y="0.4" width="7.2" height="7.2" rx="0.8" fill="#f4f4f4" stroke="#8a8a8a" stroke-width="0.6"/><rect x="1.6" y="2.6" width="4.8" height="3.6" fill="none" stroke="#9a9a9a" stroke-width="0.5"/></svg>
<span class="t" style="top:102px;line-height:9px;height:9px;font-size:7.7px;color:#9a9a9a;left:486.4px;transform-origin:50% 50%;transform:scaleX(0.790);">Selecionar Caixa</span>
<div class="b" style="left:245px;top:128.5px;width:311.5px;height:61px;border:0.6px solid #e7e7e7;border-radius:1px;"></div>
<div class="b" style="left:249.5px;top:124px;width:99px;height:9px;background:#f0f0f0;"></div>
<span class="t" style="top:124px;line-height:9px;height:9px;font-size:7.5px;color:#111;left:251.5px;transform-origin:0 50%;transform:scaleX(0.837);">Montar Parcelas Automáticamente</span>
<span class="t" style="top:144px;line-height:9px;height:9px;font-size:7.5px;color:#111;left:253.5px;transform-origin:0 50%;transform:scaleX(0.800);">Forma:</span>
<div class="b" style="left:276.6px;top:142px;width:87.2px;height:12.8px;background:#fff;border:0.6px solid #e0e0e0;border-radius:1.5px;border-bottom-color:#a2a2a2;"></div>
<span class="t" style="top:144px;line-height:9px;height:9px;font-size:7.5px;color:#111;left:279.5px;transform-origin:0 50%;transform:scaleX(0.823);">Boleto</span>
<svg style="left:356px;top:147px" width="5" height="4" viewBox="0 0 5 4"><path d="M0.5 0.8 L2.5 2.9 L4.5 0.8" stroke="#555" stroke-width="0.6" fill="none"/></svg>
<div class="b" style="left:369px;top:142px;width:71.5px;height:12.6px;background:#ffffd8;border-bottom:0.7px solid #d4d4b4;"></div>
<div class="b" style="left:446px;top:135.3px;width:104.7px;height:21.7px;background:#fdfdfd;border:0.8px solid #3a84d0;border-radius:2.8px;"></div>
<span class="t" style="top:142px;line-height:9px;height:9px;font-size:7.7px;color:#111;left:444.1px;transform-origin:50% 50%;transform:scaleX(0.812);">CALCULAR  PARCELAMENTO</span>
<span class="t" style="top:169px;line-height:9px;height:9px;font-size:7.5px;color:#111;left:252.5px;transform-origin:0 50%;transform:scaleX(0.855);">1ª Vencimento:</span>
<div class="b" style="left:299px;top:166.5px;width:49.5px;height:14px;background:#ffffe1;border-bottom:0.7px solid #c6c6a8;"></div>
<span class="t" style="top:169px;line-height:10px;height:10px;font-size:9px;color:#000;font-weight:bold;left:301.28px;transform-origin:50% 50%;transform:scaleX(0.933);">31/08/2023</span>
<svg style="left:352.5px;top:168.8px" width="11" height="10.4" viewBox="0 0 11 10.4"><rect x="0" y="0" width="11" height="10.4" fill="#2f8a4a"/><rect x="0.6" y="0.4" width="9.8" height="1.6" fill="#1c6636"/><rect x="1" y="2.6" width="9" height="5.4" fill="#56b070"/><rect x="1" y="8.2" width="9" height="1.4" fill="#3a9a58"/></svg>
<span class="t" style="top:170px;line-height:9px;height:9px;font-size:7.5px;color:#111;left:378.5px;transform-origin:0 50%;transform:scaleX(0.843);">Nº de Parcelas</span>
<div class="b" style="left:423px;top:167.3px;width:17.2px;height:13px;background:#ffffe1;border-bottom:0.7px solid #c6c6a8;"></div>
<span class="t" style="top:169px;line-height:10px;height:10px;font-size:9px;color:#000;font-weight:bold;left:426.6px;transform-origin:50% 50%;transform:scaleX(0.949);">12</span>
<svg style="left:445.5px;top:164.3px" width="8" height="8" viewBox="0 0 8 8"><circle cx="4" cy="4" r="3.4" fill="#fafafa" stroke="#6a6a6a" stroke-width="0.6"/></svg>
<span class="t" style="top:164px;line-height:9px;height:9px;font-size:7.5px;color:#111;left:455.5px;transform-origin:0 50%;transform:scaleX(0.817);">Intervalo de Dias</span>
<svg style="left:445.5px;top:176.5px" width="8" height="8" viewBox="0 0 8 8"><circle cx="4" cy="4" r="3.85" fill="#0f62b6"/><circle cx="4" cy="4" r="1.85" fill="#fff"/></svg>
<span class="t" style="top:176px;line-height:9px;height:9px;font-size:7.5px;color:#111;left:455.5px;transform-origin:0 50%;transform:scaleX(0.823);">Fixar Dia por Parcela</span>
<span class="t" style="top:170px;line-height:9px;height:9px;font-size:7.5px;color:#111;left:524px;transform-origin:0 50%;transform:scaleX(0.858);">Nº</span>
<div class="b" style="left:533.5px;top:167.5px;width:17px;height:13.5px;background:#ffffe1;border-bottom:0.7px solid #c6c6a8;"></div>
<span class="t" style="top:170px;line-height:10px;height:10px;font-size:9px;color:#000;font-weight:bold;left:537px;transform-origin:50% 50%;transform:scaleX(0.949);">30</span>
<div class="b" style="left:245px;top:196px;width:309.5px;height:182.5px;background:#fff;border-top:0.8px solid #858585;border-left:0.8px solid #858585;border-right:0.5px solid #e2e2e2;border-bottom:0.5px solid #e2e2e2;"></div>
<div class="b" style="left:245.8px;top:196.8px;width:300px;height:8.2px;background:#fff;"></div>
<span class="t" style="top:196px;line-height:9px;height:9px;font-size:7.5px;color:#222;left:248.5px;transform-origin:0 50%;transform:scaleX(0.800);">Forma -&gt;</span>
<span class="t" style="top:196px;line-height:9px;height:9px;font-size:7.5px;color:#222;left:334px;transform-origin:0 50%;transform:scaleX(0.860);">P</span>
<span class="t" style="top:196px;line-height:9px;height:9px;font-size:7.5px;color:#222;left:345px;transform-origin:0 50%;transform:scaleX(0.842);">Vencimento</span>
<span class="t" style="top:196px;line-height:9px;height:9px;font-size:7.5px;color:#222;left:386px;transform-origin:0 50%;transform:scaleX(0.914);">Valor</span>
<span class="t" style="top:196px;line-height:9px;height:9px;font-size:7.5px;color:#222;left:433px;transform-origin:0 50%;transform:scaleX(0.784);">Cheque</span>
<span class="t" style="top:196px;line-height:9px;height:9px;font-size:7.5px;color:#222;left:468px;transform-origin:0 50%;transform:scaleX(0.788);">TITULO</span>
<span class="t" style="top:196px;line-height:9px;height:9px;font-size:7.5px;color:#222;left:508px;transform-origin:0 50%;transform:scaleX(0.808);">Pagamento -:</span>
<div class="b" style="left:330.4px;top:196.8px;width:0.5px;height:8.2px;background:#dedede;"></div>
<div class="b" style="left:341.8px;top:196.8px;width:0.5px;height:8.2px;background:#dedede;"></div>
<div class="b" style="left:382.6px;top:196.8px;width:0.5px;height:8.2px;background:#dedede;"></div>
<div class="b" style="left:429.6px;top:196.8px;width:0.5px;height:8.2px;background:#dedede;"></div>
<div class="b" style="left:464.2px;top:196.8px;width:0.5px;height:8.2px;background:#dedede;"></div>
<div class="b" style="left:504.4px;top:196.8px;width:0.5px;height:8.2px;background:#dedede;"></div>
<div class="b" style="left:544.6px;top:196.8px;width:0.5px;height:8.2px;background:#dedede;"></div>
<div class="b" style="left:245.8px;top:205px;width:298.8px;height:8.17px;background:#dcfbe6;border-bottom:0.5px solid #ccd6ce;"></div>
<div class="b" style="left:245.8px;top:205px;width:84.6px;height:7.67px;background:#0a74d4;"></div>
<div class="b" style="left:330.4px;top:205px;width:0.5px;height:8.17px;background:#bcc6be;"></div>
<div class="b" style="left:341.8px;top:205px;width:0.5px;height:8.17px;background:#bcc6be;"></div>
<div class="b" style="left:382.6px;top:205px;width:0.5px;height:8.17px;background:#bcc6be;"></div>
<div class="b" style="left:429.6px;top:205px;width:0.5px;height:8.17px;background:#bcc6be;"></div>
<div class="b" style="left:464.2px;top:205px;width:0.5px;height:8.17px;background:#bcc6be;"></div>
<div class="b" style="left:504.4px;top:205px;width:0.5px;height:8.17px;background:#bcc6be;"></div>
<div class="b" style="left:544.6px;top:205px;width:0.5px;height:8.17px;background:#bcc6be;"></div>
<span class="t" style="top:205px;line-height:9px;height:9px;font-size:8px;color:#fff;left:247.8px;transform-origin:0 50%;transform:scaleX(0.772);">Boleto</span>
<span class="t" style="top:205px;line-height:9px;height:9px;font-size:8px;color:#111;left:333.58px;transform-origin:50% 50%;transform:scaleX(0.809);">1</span>
<span class="t" style="top:205px;line-height:9px;height:9px;font-size:8px;color:#111;left:344px;transform-origin:0 50%;transform:scaleX(0.849);">30/09/2023</span>
<span class="t" style="top:205px;line-height:9px;height:9px;font-size:8px;color:#111;right:371.8px;transform-origin:100% 50%;transform:scaleX(0.787);">1.016,67</span>
<span class="t" style="top:205px;line-height:9px;height:9px;font-size:8px;color:#111;left:466.4px;transform-origin:0 50%;transform:scaleX(0.779);">OS000006</span>
<span class="t" style="top:205px;line-height:9px;height:9px;font-size:7.5px;color:#111;left:509.6px;transform-origin:0 50%;transform:scaleX(1.260);font-style:italic;">/  /</span>
<div class="b" style="left:245.8px;top:213.17px;width:298.8px;height:8.17px;background:#dcfbe6;border-bottom:0.5px solid #ccd6ce;"></div>
<div class="b" style="left:330.4px;top:213.17px;width:0.5px;height:8.17px;background:#bcc6be;"></div>
<div class="b" style="left:341.8px;top:213.17px;width:0.5px;height:8.17px;background:#bcc6be;"></div>
<div class="b" style="left:382.6px;top:213.17px;width:0.5px;height:8.17px;background:#bcc6be;"></div>
<div class="b" style="left:429.6px;top:213.17px;width:0.5px;height:8.17px;background:#bcc6be;"></div>
<div class="b" style="left:464.2px;top:213.17px;width:0.5px;height:8.17px;background:#bcc6be;"></div>
<div class="b" style="left:504.4px;top:213.17px;width:0.5px;height:8.17px;background:#bcc6be;"></div>
<div class="b" style="left:544.6px;top:213.17px;width:0.5px;height:8.17px;background:#bcc6be;"></div>
<span class="t" style="top:213px;line-height:9px;height:9px;font-size:8px;color:#111;left:247.8px;transform-origin:0 50%;transform:scaleX(0.772);">Boleto</span>
<span class="t" style="top:213px;line-height:9px;height:9px;font-size:8px;color:#111;left:333.58px;transform-origin:50% 50%;transform:scaleX(0.809);">2</span>
<span class="t" style="top:213px;line-height:9px;height:9px;font-size:8px;color:#111;left:344px;transform-origin:0 50%;transform:scaleX(0.849);">30/10/2023</span>
<span class="t" style="top:213px;line-height:9px;height:9px;font-size:8px;color:#111;right:371.8px;transform-origin:100% 50%;transform:scaleX(0.787);">1.016,67</span>
<span class="t" style="top:213px;line-height:9px;height:9px;font-size:8px;color:#111;left:466.4px;transform-origin:0 50%;transform:scaleX(0.779);">OS000006</span>
<span class="t" style="top:213px;line-height:9px;height:9px;font-size:7.5px;color:#111;left:509.6px;transform-origin:0 50%;transform:scaleX(1.260);font-style:italic;">/  /</span>
<div class="b" style="left:245.8px;top:221.34px;width:298.8px;height:8.17px;background:#dcfbe6;border-bottom:0.5px solid #ccd6ce;"></div>
<div class="b" style="left:330.4px;top:221.34px;width:0.5px;height:8.17px;background:#bcc6be;"></div>
<div class="b" style="left:341.8px;top:221.34px;width:0.5px;height:8.17px;background:#bcc6be;"></div>
<div class="b" style="left:382.6px;top:221.34px;width:0.5px;height:8.17px;background:#bcc6be;"></div>
<div class="b" style="left:429.6px;top:221.34px;width:0.5px;height:8.17px;background:#bcc6be;"></div>
<div class="b" style="left:464.2px;top:221.34px;width:0.5px;height:8.17px;background:#bcc6be;"></div>
<div class="b" style="left:504.4px;top:221.34px;width:0.5px;height:8.17px;background:#bcc6be;"></div>
<div class="b" style="left:544.6px;top:221.34px;width:0.5px;height:8.17px;background:#bcc6be;"></div>
<span class="t" style="top:221px;line-height:9px;height:9px;font-size:8px;color:#111;left:247.8px;transform-origin:0 50%;transform:scaleX(0.772);">Boleto</span>
<span class="t" style="top:221px;line-height:9px;height:9px;font-size:8px;color:#111;left:333.58px;transform-origin:50% 50%;transform:scaleX(0.809);">3</span>
<span class="t" style="top:221px;line-height:9px;height:9px;font-size:8px;color:#111;left:344px;transform-origin:0 50%;transform:scaleX(0.862);">30/11/2023</span>
<span class="t" style="top:221px;line-height:9px;height:9px;font-size:8px;color:#111;right:371.8px;transform-origin:100% 50%;transform:scaleX(0.787);">1.016,67</span>
<span class="t" style="top:221px;line-height:9px;height:9px;font-size:8px;color:#111;left:466.4px;transform-origin:0 50%;transform:scaleX(0.779);">OS000006</span>
<span class="t" style="top:221px;line-height:9px;height:9px;font-size:7.5px;color:#111;left:509.6px;transform-origin:0 50%;transform:scaleX(1.260);font-style:italic;">/  /</span>
<div class="b" style="left:245.8px;top:229.51px;width:298.8px;height:8.17px;background:#dcfbe6;border-bottom:0.5px solid #ccd6ce;"></div>
<div class="b" style="left:330.4px;top:229.51px;width:0.5px;height:8.17px;background:#bcc6be;"></div>
<div class="b" style="left:341.8px;top:229.51px;width:0.5px;height:8.17px;background:#bcc6be;"></div>
<div class="b" style="left:382.6px;top:229.51px;width:0.5px;height:8.17px;background:#bcc6be;"></div>
<div class="b" style="left:429.6px;top:229.51px;width:0.5px;height:8.17px;background:#bcc6be;"></div>
<div class="b" style="left:464.2px;top:229.51px;width:0.5px;height:8.17px;background:#bcc6be;"></div>
<div class="b" style="left:504.4px;top:229.51px;width:0.5px;height:8.17px;background:#bcc6be;"></div>
<div class="b" style="left:544.6px;top:229.51px;width:0.5px;height:8.17px;background:#bcc6be;"></div>
<span class="t" style="top:230px;line-height:9px;height:9px;font-size:8px;color:#111;left:247.8px;transform-origin:0 50%;transform:scaleX(0.772);">Boleto</span>
<span class="t" style="top:230px;line-height:9px;height:9px;font-size:8px;color:#111;left:333.58px;transform-origin:50% 50%;transform:scaleX(0.809);">4</span>
<span class="t" style="top:230px;line-height:9px;height:9px;font-size:8px;color:#111;left:344px;transform-origin:0 50%;transform:scaleX(0.849);">30/12/2023</span>
<span class="t" style="top:230px;line-height:9px;height:9px;font-size:8px;color:#111;right:371.8px;transform-origin:100% 50%;transform:scaleX(0.787);">1.016,67</span>
<span class="t" style="top:230px;line-height:9px;height:9px;font-size:8px;color:#111;left:466.4px;transform-origin:0 50%;transform:scaleX(0.779);">OS000006</span>
<span class="t" style="top:229px;line-height:9px;height:9px;font-size:7.5px;color:#111;left:509.6px;transform-origin:0 50%;transform:scaleX(1.260);font-style:italic;">/  /</span>
<div class="b" style="left:245.8px;top:237.68px;width:298.8px;height:8.17px;background:#dcfbe6;border-bottom:0.5px solid #ccd6ce;"></div>
<div class="b" style="left:330.4px;top:237.68px;width:0.5px;height:8.17px;background:#bcc6be;"></div>
<div class="b" style="left:341.8px;top:237.68px;width:0.5px;height:8.17px;background:#bcc6be;"></div>
<div class="b" style="left:382.6px;top:237.68px;width:0.5px;height:8.17px;background:#bcc6be;"></div>
<div class="b" style="left:429.6px;top:237.68px;width:0.5px;height:8.17px;background:#bcc6be;"></div>
<div class="b" style="left:464.2px;top:237.68px;width:0.5px;height:8.17px;background:#bcc6be;"></div>
<div class="b" style="left:504.4px;top:237.68px;width:0.5px;height:8.17px;background:#bcc6be;"></div>
<div class="b" style="left:544.6px;top:237.68px;width:0.5px;height:8.17px;background:#bcc6be;"></div>
<span class="t" style="top:238px;line-height:9px;height:9px;font-size:8px;color:#111;left:247.8px;transform-origin:0 50%;transform:scaleX(0.772);">Boleto</span>
<span class="t" style="top:238px;line-height:9px;height:9px;font-size:8px;color:#111;left:333.58px;transform-origin:50% 50%;transform:scaleX(0.809);">5</span>
<span class="t" style="top:238px;line-height:9px;height:9px;font-size:8px;color:#111;left:344px;transform-origin:0 50%;transform:scaleX(0.849);">30/01/2024</span>
<span class="t" style="top:238px;line-height:9px;height:9px;font-size:8px;color:#111;right:371.8px;transform-origin:100% 50%;transform:scaleX(0.787);">1.016,67</span>
<span class="t" style="top:238px;line-height:9px;height:9px;font-size:8px;color:#111;left:466.4px;transform-origin:0 50%;transform:scaleX(0.779);">OS000006</span>
<span class="t" style="top:238px;line-height:9px;height:9px;font-size:7.5px;color:#111;left:509.6px;transform-origin:0 50%;transform:scaleX(1.260);font-style:italic;">/  /</span>
<div class="b" style="left:245.8px;top:245.85px;width:298.8px;height:8.17px;background:#dcfbe6;border-bottom:0.5px solid #ccd6ce;"></div>
<div class="b" style="left:330.4px;top:245.85px;width:0.5px;height:8.17px;background:#bcc6be;"></div>
<div class="b" style="left:341.8px;top:245.85px;width:0.5px;height:8.17px;background:#bcc6be;"></div>
<div class="b" style="left:382.6px;top:245.85px;width:0.5px;height:8.17px;background:#bcc6be;"></div>
<div class="b" style="left:429.6px;top:245.85px;width:0.5px;height:8.17px;background:#bcc6be;"></div>
<div class="b" style="left:464.2px;top:245.85px;width:0.5px;height:8.17px;background:#bcc6be;"></div>
<div class="b" style="left:504.4px;top:245.85px;width:0.5px;height:8.17px;background:#bcc6be;"></div>
<div class="b" style="left:544.6px;top:245.85px;width:0.5px;height:8.17px;background:#bcc6be;"></div>
<span class="t" style="top:246px;line-height:9px;height:9px;font-size:8px;color:#111;left:247.8px;transform-origin:0 50%;transform:scaleX(0.772);">Boleto</span>
<span class="t" style="top:246px;line-height:9px;height:9px;font-size:8px;color:#111;left:333.58px;transform-origin:50% 50%;transform:scaleX(0.809);">6</span>
<span class="t" style="top:246px;line-height:9px;height:9px;font-size:8px;color:#111;left:344px;transform-origin:0 50%;transform:scaleX(0.849);">28/02/2024</span>
<span class="t" style="top:246px;line-height:9px;height:9px;font-size:8px;color:#111;right:371.8px;transform-origin:100% 50%;transform:scaleX(0.787);">1.016,67</span>
<span class="t" style="top:246px;line-height:9px;height:9px;font-size:8px;color:#111;left:466.4px;transform-origin:0 50%;transform:scaleX(0.779);">OS000006</span>
<span class="t" style="top:246px;line-height:9px;height:9px;font-size:7.5px;color:#111;left:509.6px;transform-origin:0 50%;transform:scaleX(1.260);font-style:italic;">/  /</span>
<div class="b" style="left:245.8px;top:254.02px;width:298.8px;height:8.17px;background:#dcfbe6;border-bottom:0.5px solid #ccd6ce;"></div>
<div class="b" style="left:330.4px;top:254.02px;width:0.5px;height:8.17px;background:#bcc6be;"></div>
<div class="b" style="left:341.8px;top:254.02px;width:0.5px;height:8.17px;background:#bcc6be;"></div>
<div class="b" style="left:382.6px;top:254.02px;width:0.5px;height:8.17px;background:#bcc6be;"></div>
<div class="b" style="left:429.6px;top:254.02px;width:0.5px;height:8.17px;background:#bcc6be;"></div>
<div class="b" style="left:464.2px;top:254.02px;width:0.5px;height:8.17px;background:#bcc6be;"></div>
<div class="b" style="left:504.4px;top:254.02px;width:0.5px;height:8.17px;background:#bcc6be;"></div>
<div class="b" style="left:544.6px;top:254.02px;width:0.5px;height:8.17px;background:#bcc6be;"></div>
<span class="t" style="top:254px;line-height:9px;height:9px;font-size:8px;color:#111;left:247.8px;transform-origin:0 50%;transform:scaleX(0.772);">Boleto</span>
<span class="t" style="top:254px;line-height:9px;height:9px;font-size:8px;color:#111;left:333.58px;transform-origin:50% 50%;transform:scaleX(0.809);">7</span>
<span class="t" style="top:254px;line-height:9px;height:9px;font-size:8px;color:#111;left:344px;transform-origin:0 50%;transform:scaleX(0.849);">30/03/2024</span>
<span class="t" style="top:254px;line-height:9px;height:9px;font-size:8px;color:#111;right:371.8px;transform-origin:100% 50%;transform:scaleX(0.787);">1.016,67</span>
<span class="t" style="top:254px;line-height:9px;height:9px;font-size:8px;color:#111;left:466.4px;transform-origin:0 50%;transform:scaleX(0.779);">OS000006</span>
<span class="t" style="top:254px;line-height:9px;height:9px;font-size:7.5px;color:#111;left:509.6px;transform-origin:0 50%;transform:scaleX(1.260);font-style:italic;">/  /</span>
<div class="b" style="left:245.8px;top:262.19px;width:298.8px;height:8.17px;background:#dcfbe6;border-bottom:0.5px solid #ccd6ce;"></div>
<div class="b" style="left:330.4px;top:262.19px;width:0.5px;height:8.17px;background:#bcc6be;"></div>
<div class="b" style="left:341.8px;top:262.19px;width:0.5px;height:8.17px;background:#bcc6be;"></div>
<div class="b" style="left:382.6px;top:262.19px;width:0.5px;height:8.17px;background:#bcc6be;"></div>
<div class="b" style="left:429.6px;top:262.19px;width:0.5px;height:8.17px;background:#bcc6be;"></div>
<div class="b" style="left:464.2px;top:262.19px;width:0.5px;height:8.17px;background:#bcc6be;"></div>
<div class="b" style="left:504.4px;top:262.19px;width:0.5px;height:8.17px;background:#bcc6be;"></div>
<div class="b" style="left:544.6px;top:262.19px;width:0.5px;height:8.17px;background:#bcc6be;"></div>
<span class="t" style="top:262px;line-height:9px;height:9px;font-size:8px;color:#111;left:247.8px;transform-origin:0 50%;transform:scaleX(0.772);">Boleto</span>
<span class="t" style="top:262px;line-height:9px;height:9px;font-size:8px;color:#111;left:333.58px;transform-origin:50% 50%;transform:scaleX(0.809);">8</span>
<span class="t" style="top:262px;line-height:9px;height:9px;font-size:8px;color:#111;left:344px;transform-origin:0 50%;transform:scaleX(0.849);">30/04/2024</span>
<span class="t" style="top:262px;line-height:9px;height:9px;font-size:8px;color:#111;right:371.8px;transform-origin:100% 50%;transform:scaleX(0.787);">1.016,67</span>
<span class="t" style="top:262px;line-height:9px;height:9px;font-size:8px;color:#111;left:466.4px;transform-origin:0 50%;transform:scaleX(0.779);">OS000006</span>
<span class="t" style="top:262px;line-height:9px;height:9px;font-size:7.5px;color:#111;left:509.6px;transform-origin:0 50%;transform:scaleX(1.260);font-style:italic;">/  /</span>
<div class="b" style="left:245.8px;top:270.36px;width:298.8px;height:8.17px;background:#dcfbe6;border-bottom:0.5px solid #ccd6ce;"></div>
<div class="b" style="left:330.4px;top:270.36px;width:0.5px;height:8.17px;background:#bcc6be;"></div>
<div class="b" style="left:341.8px;top:270.36px;width:0.5px;height:8.17px;background:#bcc6be;"></div>
<div class="b" style="left:382.6px;top:270.36px;width:0.5px;height:8.17px;background:#bcc6be;"></div>
<div class="b" style="left:429.6px;top:270.36px;width:0.5px;height:8.17px;background:#bcc6be;"></div>
<div class="b" style="left:464.2px;top:270.36px;width:0.5px;height:8.17px;background:#bcc6be;"></div>
<div class="b" style="left:504.4px;top:270.36px;width:0.5px;height:8.17px;background:#bcc6be;"></div>
<div class="b" style="left:544.6px;top:270.36px;width:0.5px;height:8.17px;background:#bcc6be;"></div>
<span class="t" style="top:270px;line-height:9px;height:9px;font-size:8px;color:#111;left:247.8px;transform-origin:0 50%;transform:scaleX(0.772);">Boleto</span>
<span class="t" style="top:270px;line-height:9px;height:9px;font-size:8px;color:#111;left:333.58px;transform-origin:50% 50%;transform:scaleX(0.809);">9</span>
<span class="t" style="top:270px;line-height:9px;height:9px;font-size:8px;color:#111;left:344px;transform-origin:0 50%;transform:scaleX(0.849);">30/05/2024</span>
<span class="t" style="top:270px;line-height:9px;height:9px;font-size:8px;color:#111;right:371.8px;transform-origin:100% 50%;transform:scaleX(0.787);">1.016,67</span>
<span class="t" style="top:270px;line-height:9px;height:9px;font-size:8px;color:#111;left:466.4px;transform-origin:0 50%;transform:scaleX(0.779);">OS000006</span>
<span class="t" style="top:270px;line-height:9px;height:9px;font-size:7.5px;color:#111;left:509.6px;transform-origin:0 50%;transform:scaleX(1.260);font-style:italic;">/  /</span>
<div class="b" style="left:245.8px;top:278.53px;width:298.8px;height:8.17px;background:#dcfbe6;border-bottom:0.5px solid #ccd6ce;"></div>
<div class="b" style="left:330.4px;top:278.53px;width:0.5px;height:8.17px;background:#bcc6be;"></div>
<div class="b" style="left:341.8px;top:278.53px;width:0.5px;height:8.17px;background:#bcc6be;"></div>
<div class="b" style="left:382.6px;top:278.53px;width:0.5px;height:8.17px;background:#bcc6be;"></div>
<div class="b" style="left:429.6px;top:278.53px;width:0.5px;height:8.17px;background:#bcc6be;"></div>
<div class="b" style="left:464.2px;top:278.53px;width:0.5px;height:8.17px;background:#bcc6be;"></div>
<div class="b" style="left:504.4px;top:278.53px;width:0.5px;height:8.17px;background:#bcc6be;"></div>
<div class="b" style="left:544.6px;top:278.53px;width:0.5px;height:8.17px;background:#bcc6be;"></div>
<span class="t" style="top:279px;line-height:9px;height:9px;font-size:8px;color:#111;left:247.8px;transform-origin:0 50%;transform:scaleX(0.772);">Boleto</span>
<span class="t" style="top:279px;line-height:9px;height:9px;font-size:8px;color:#111;left:331.35px;transform-origin:50% 50%;transform:scaleX(0.742);">10</span>
<span class="t" style="top:279px;line-height:9px;height:9px;font-size:8px;color:#111;left:344px;transform-origin:0 50%;transform:scaleX(0.849);">30/06/2024</span>
<span class="t" style="top:279px;line-height:9px;height:9px;font-size:8px;color:#111;right:371.8px;transform-origin:100% 50%;transform:scaleX(0.787);">1.016,67</span>
<span class="t" style="top:279px;line-height:9px;height:9px;font-size:8px;color:#111;left:466.4px;transform-origin:0 50%;transform:scaleX(0.779);">OS000006</span>
<span class="t" style="top:278px;line-height:9px;height:9px;font-size:7.5px;color:#111;left:509.6px;transform-origin:0 50%;transform:scaleX(1.260);font-style:italic;">/  /</span>
<div class="b" style="left:245.8px;top:286.7px;width:298.8px;height:8.17px;background:#dcfbe6;border-bottom:0.5px solid #ccd6ce;"></div>
<div class="b" style="left:330.4px;top:286.7px;width:0.5px;height:8.17px;background:#bcc6be;"></div>
<div class="b" style="left:341.8px;top:286.7px;width:0.5px;height:8.17px;background:#bcc6be;"></div>
<div class="b" style="left:382.6px;top:286.7px;width:0.5px;height:8.17px;background:#bcc6be;"></div>
<div class="b" style="left:429.6px;top:286.7px;width:0.5px;height:8.17px;background:#bcc6be;"></div>
<div class="b" style="left:464.2px;top:286.7px;width:0.5px;height:8.17px;background:#bcc6be;"></div>
<div class="b" style="left:504.4px;top:286.7px;width:0.5px;height:8.17px;background:#bcc6be;"></div>
<div class="b" style="left:544.6px;top:286.7px;width:0.5px;height:8.17px;background:#bcc6be;"></div>
<span class="t" style="top:287px;line-height:9px;height:9px;font-size:8px;color:#111;left:247.8px;transform-origin:0 50%;transform:scaleX(0.772);">Boleto</span>
<span class="t" style="top:287px;line-height:9px;height:9px;font-size:8px;color:#111;left:331.65px;transform-origin:50% 50%;transform:scaleX(0.795);">11</span>
<span class="t" style="top:287px;line-height:9px;height:9px;font-size:8px;color:#111;left:344px;transform-origin:0 50%;transform:scaleX(0.849);">30/07/2024</span>
<span class="t" style="top:287px;line-height:9px;height:9px;font-size:8px;color:#111;right:371.8px;transform-origin:100% 50%;transform:scaleX(0.787);">1.016,67</span>
<span class="t" style="top:287px;line-height:9px;height:9px;font-size:8px;color:#111;left:466.4px;transform-origin:0 50%;transform:scaleX(0.779);">OS000006</span>
<span class="t" style="top:287px;line-height:9px;height:9px;font-size:7.5px;color:#111;left:509.6px;transform-origin:0 50%;transform:scaleX(1.260);font-style:italic;">/  /</span>
<div class="b" style="left:245.8px;top:294.87px;width:298.8px;height:8.17px;background:#dcfbe6;border-bottom:0.5px solid #ccd6ce;"></div>
<div class="b" style="left:330.4px;top:294.87px;width:0.5px;height:8.17px;background:#bcc6be;"></div>
<div class="b" style="left:341.8px;top:294.87px;width:0.5px;height:8.17px;background:#bcc6be;"></div>
<div class="b" style="left:382.6px;top:294.87px;width:0.5px;height:8.17px;background:#bcc6be;"></div>
<div class="b" style="left:429.6px;top:294.87px;width:0.5px;height:8.17px;background:#bcc6be;"></div>
<div class="b" style="left:464.2px;top:294.87px;width:0.5px;height:8.17px;background:#bcc6be;"></div>
<div class="b" style="left:504.4px;top:294.87px;width:0.5px;height:8.17px;background:#bcc6be;"></div>
<div class="b" style="left:544.6px;top:294.87px;width:0.5px;height:8.17px;background:#bcc6be;"></div>
<span class="t" style="top:295px;line-height:9px;height:9px;font-size:8px;color:#111;left:247.8px;transform-origin:0 50%;transform:scaleX(0.772);">Boleto</span>
<span class="t" style="top:295px;line-height:9px;height:9px;font-size:8px;color:#111;left:331.35px;transform-origin:50% 50%;transform:scaleX(0.742);">12</span>
<span class="t" style="top:295px;line-height:9px;height:9px;font-size:8px;color:#111;left:344px;transform-origin:0 50%;transform:scaleX(0.849);">30/08/2024</span>
<span class="t" style="top:295px;line-height:9px;height:9px;font-size:8px;color:#111;right:371.8px;transform-origin:100% 50%;transform:scaleX(0.787);">1.016,63</span>
<span class="t" style="top:295px;line-height:9px;height:9px;font-size:8px;color:#111;left:466.4px;transform-origin:0 50%;transform:scaleX(0.779);">OS000006</span>
<span class="t" style="top:295px;line-height:9px;height:9px;font-size:7.5px;color:#111;left:509.6px;transform-origin:0 50%;transform:scaleX(1.260);font-style:italic;">/  /</span>
<div class="b" style="left:544.8px;top:196.8px;width:9.2px;height:181.2px;background:#f1f1f1;"></div>
<div class="b" style="left:549.6px;top:207.2px;width:0.8px;height:8.6px;background:#6a6a6a;"></div>
<div class="b" style="left:245.8px;top:371.8px;width:308.2px;height:6.2px;background:#f1f1f1;"></div>
<div class="b" style="left:246px;top:382px;width:86.5px;height:21.5px;background:#fcfcfc;border:0.6px solid #dadada;border-radius:3px;border-bottom-color:#c6c6c6;"></div>
<svg style="left:249.5px;top:386px" width="13" height="13" viewBox="0 0 13 13"><path d="M3 1 L9.5 0.6 L10.5 5 L2.6 5.6Z" fill="#fdfdfd" stroke="#6a8ad8" stroke-width="0.5"/><path d="M0.6 6 L11.6 5 Q12.6 5 12.6 6.2 L12.4 9.4 L1.4 10.6 Q0.6 10.6 0.6 9.6Z" fill="#dfe8fb" stroke="#5a7ad0" stroke-width="0.5"/><path d="M3 9 L10 8.3 L10.6 11.6 L3.6 12.4Z" fill="#fff" stroke="#6a8ad8" stroke-width="0.4"/></svg>
<span class="t" style="top:389px;line-height:9px;height:9px;font-size:7.5px;color:#111;left:265.33px;transform-origin:50% 50%;transform:scaleX(0.806);">Imprimir Parcelas</span>
<div class="b" style="left:341px;top:382px;width:86.5px;height:21.5px;background:#fcfcfc;border:0.6px solid #dadada;border-radius:3px;border-bottom-color:#c6c6c6;"></div>
<svg style="left:344px;top:386.5px" width="14" height="11" viewBox="0 0 14 11"><path d="M0.6 5.2 L3 3.8 L5.2 6.8 Q8 2.6 13.4 0.4 Q8.6 4.6 5.8 10.6 L4.6 10.6Z" fill="#22b022" stroke="#128a12" stroke-width="0.3"/></svg>
<span class="t" style="top:389px;line-height:9px;height:9px;font-size:7.5px;color:#111;left:364.91px;transform-origin:50% 50%;transform:scaleX(0.830);">Salvar e Voltar</span>
<span class="t" style="top:389px;line-height:9px;height:9px;font-size:7.5px;color:#111;left:444px;transform-origin:0 50%;transform:scaleX(0.831);">TOTAL</span>
<div class="b" style="left:466.5px;top:383px;width:88px;height:19.5px;background:#ffffe1;border-bottom:0.8px solid #c6c6a8;"></div>
<span class="t" style="top:384px;line-height:14px;height:14px;font-size:12px;color:#1c1488;font-weight:bold;right:250.4px;transform-origin:100% 50%;transform:scaleX(1.030);letter-spacing:0.3px;">12.200,00</span>
</div>
</body></html>
